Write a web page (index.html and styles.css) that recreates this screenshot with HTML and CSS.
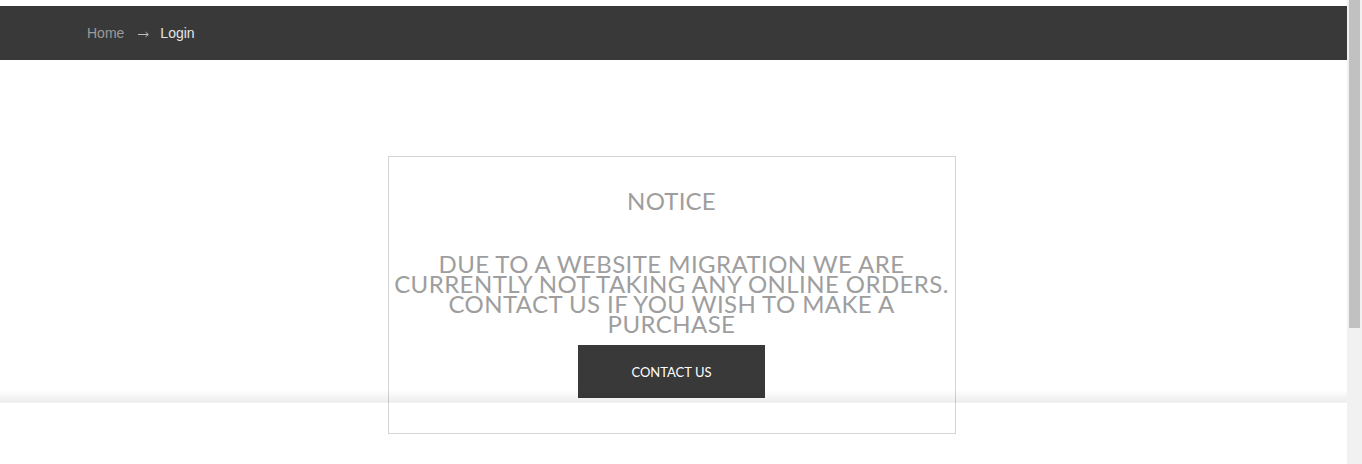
FILE: index.html
```html
<!DOCTYPE html>
<html>
<head>
<meta charset="utf-8">
<link rel="stylesheet" href="styles.css">
</head>
<body>
<div class="page">
  <div class="topbar">
    <nav class="crumbs">
      <a class="crumb-link" href="#">Home</a>
      <svg class="crumb-sep" width="11" height="7" viewBox="0 0 11 7" aria-label="→"><path d="M0 3.5H10.2M7.6 1.2L10.3 3.5L7.6 5.8" fill="none" stroke="#bdbdbd" stroke-width="1"/></svg>
      <span class="crumb-current">Login</span>
    </nav>
  </div>
  <main class="main">
    <section class="notice">
      <h1 class="notice-title">NOTICE</h1>
      <p class="notice-text">DUE TO A WEBSITE MIGRATION WE ARE CURRENTLY NOT TAKING ANY ONLINE ORDERS. CONTACT US IF YOU WISH TO MAKE A PURCHASE</p>
      <a class="notice-btn" href="#">CONTACT US</a>
    </section>
  </main>
</div>
<div class="bottom-shade"></div>
<div class="scrollbar"><div class="scrollbar-thumb"></div></div>
</body>
</html>
```
FILE: styles.css
```css
html, body {
  margin: 0;
  padding: 0;
  background: #fff;
  height: 100%;
  overflow: hidden;
}
.page {
  margin-right: 15px;
  padding-top: 6px;
  font-family: "Liberation Sans", Arial, sans-serif;
}
.topbar {
  background: #393939;
  height: 54px;
  display: flex;
  align-items: center;
  padding-left: 87px;
}
.crumbs {
  display: flex;
  align-items: center;
  font-size: 14px;
}
.crumb-link {
  color: #9b9b9b;
  text-decoration: none;
}
.crumb-sep {
  display: block;
  margin: 2px 11px 0 14px;
}
.crumb-current {
  color: #e6e6e6;
}
.main {
  display: flex;
  justify-content: center;
  padding-top: 96px;
  padding-right: 4px;
}
.notice {
  width: 566px;
  height: 276px;
  border: 1px solid #d4d4d4;
  display: flex;
  flex-direction: column;
  align-items: center;
  text-align: center;
  font-family: Lato, "Liberation Sans", sans-serif;
  color: #9e9e9e;
}
.notice-title {
  margin: 32px 0 0;
  font-size: 24px;
  line-height: 24px;
  font-weight: 400;
  letter-spacing: 0.2px;
}
.notice-text {
  margin: 41px 0 0;
  padding: 0;
  font-size: 24px;
  line-height: 20px;
  font-weight: 400;
  letter-spacing: 0.42px;
}
.notice-btn {
  margin-top: 11px;
  width: 187px;
  height: 53px;
  background: #393939;
  color: #fff;
  display: flex;
  align-items: center;
  justify-content: center;
  font-size: 13px;
  font-weight: 400;
  text-decoration: none;
}
.bottom-shade {
  position: fixed;
  left: 0;
  right: 0;
  top: 390px;
  height: 12px;
  background: linear-gradient(to bottom, rgba(0,0,0,0), rgba(0,0,0,0.07));
  border-bottom: 1px solid rgba(0,0,0,0.05);
  pointer-events: none;
}
.scrollbar {
  position: fixed;
  top: 0;
  right: 0;
  width: 15px;
  height: 100%;
  background: #f1f1f1;
}
.scrollbar-thumb {
  margin: 0 2px;
  height: 328px;
  background: #c1c1c1;
}
```
